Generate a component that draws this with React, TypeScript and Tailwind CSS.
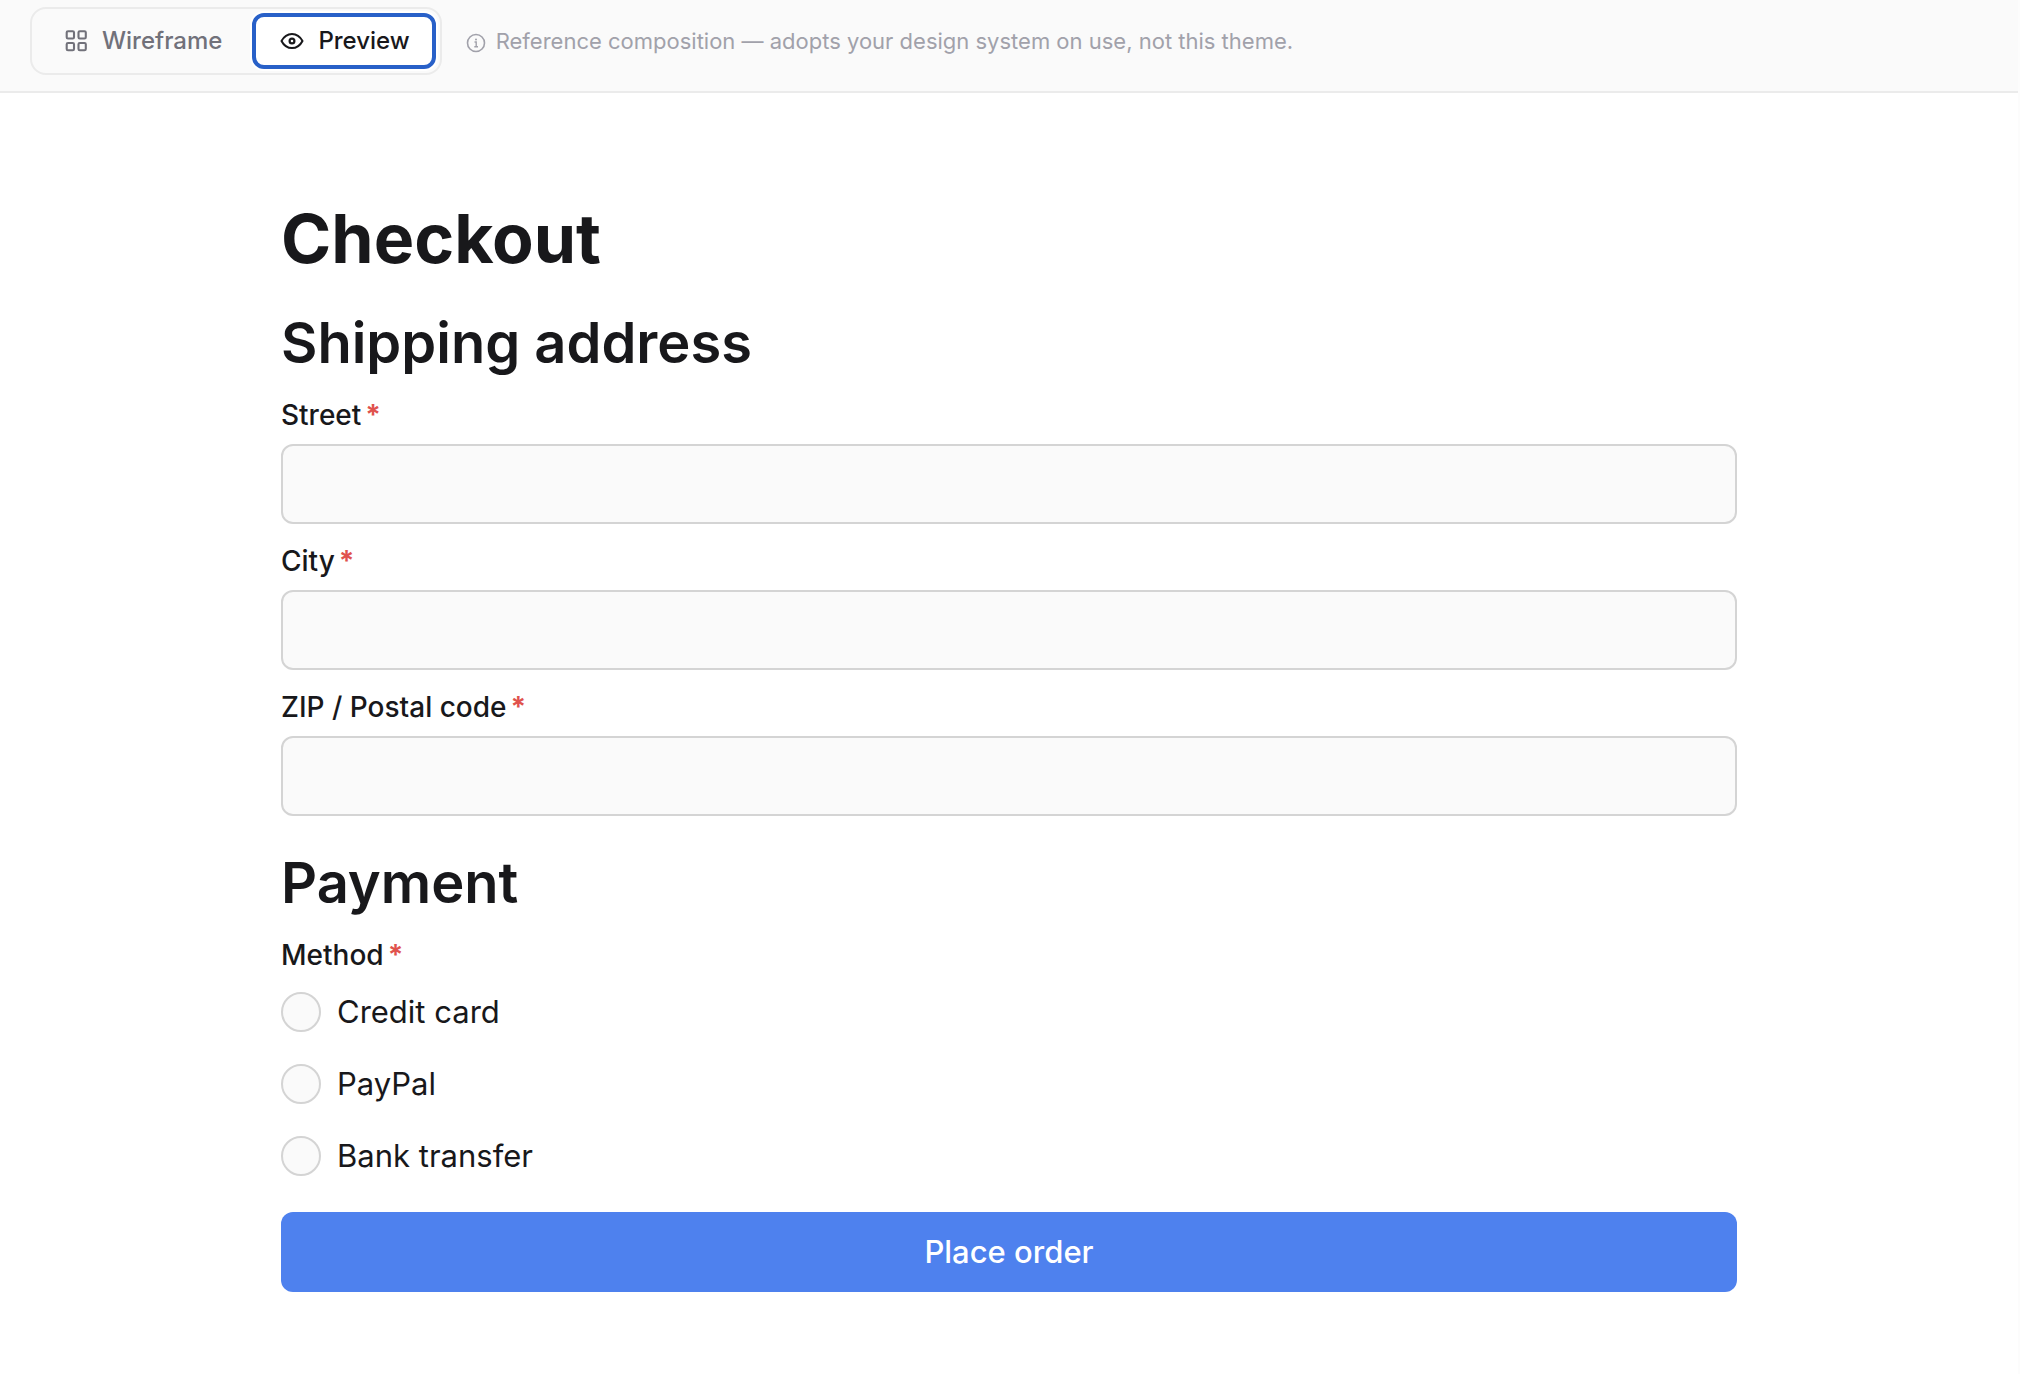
import { useState } from "react"

const fields = [
	{ id: "street", label: "Street" },
	{ id: "city", label: "City" },
	{ id: "zip", label: "ZIP / Postal code" },
]

const methods = ["Credit card", "PayPal", "Bank transfer"]

const GridIcon = () => (
	<svg width="24" height="24" viewBox="0 0 24 24" fill="none" stroke="currentColor" strokeWidth="2.1" aria-hidden="true">
		<rect x="2.7" y="2.2" width="7.3" height="7.3" rx="1.3" />
		<rect x="14.5" y="2.2" width="7.3" height="7.3" rx="1.3" />
		<rect x="2.7" y="14" width="7.3" height="7.3" rx="1.3" />
		<rect x="14.5" y="14" width="7.3" height="7.3" rx="1.3" />
	</svg>
)

const EyeIcon = () => (
	<svg width="24" height="24" viewBox="0 0 24 24" fill="none" stroke="currentColor" strokeWidth="2" aria-hidden="true">
		<path d="M1.5 12C4 7.200 7.800 4.900 12 4.900S20 7.200 22.500 12C20 16.800 16.200 19.100 12 19.100S4 16.800 1.500 12Z" strokeLinejoin="round" />
		<circle cx="12" cy="12" r="2.400" strokeWidth="2.200" />
	</svg>
)

const InfoIcon = () => (
	<svg width="20" height="20" viewBox="0 0 20 20" fill="none" stroke="currentColor" strokeWidth="1.600" className="mt-1" aria-hidden="true">
		<circle cx="10" cy="10" r="8.500" />
		<path d="M8.500 9H10.200V13.500M8.300 13.700H12" strokeWidth="1.400" />
		<circle cx="10" cy="6.500" r="1" fill="currentColor" stroke="none" />
	</svg>
)

const Required = () => <span className="ml-1 font-bold text-[#e0524d]">*</span>

const App = () => {
	const [view, setView] = useState("preview")
	const [method, setMethod] = useState("")

	const tabClass = (name: string) =>
		view === name
			? "flex h-14 items-center gap-3.5 rounded-xl border-4 border-[#2860c8] bg-white pr-[22px] pl-6 text-[#18181b] ring-2 ring-white"
			: "flex h-14 items-center gap-3.5 rounded-xl border-4 border-transparent pr-[22px] pl-6 text-[#71717a]"

	return (
		<div className="min-h-screen border-r-2 border-[#fcfcfc] bg-white font-['Inter','Liberation_Sans',sans-serif] text-[#18181b]">
			<header className="flex items-center gap-6 border-b-2 border-[#ebebeb] bg-[#fafafa] px-[30px] pt-[7px] pb-4">
				<div className="flex gap-1 rounded-2xl border-2 border-[#ebebeb] p-1 text-2xl font-medium">
					<button type="button" aria-pressed={view === "wireframe"} onClick={() => setView("wireframe")} className={tabClass("wireframe")}>
						<GridIcon />
						Wireframe
					</button>
					<button type="button" aria-pressed={view === "preview"} onClick={() => setView("preview")} className={tabClass("preview")}>
						<EyeIcon />
						Preview
					</button>
				</div>
				<p className="flex items-center gap-2.5 text-[22px] text-[#a1a1aa]">
					<InfoIcon />
					Reference composition — adopts your design system on use, not this theme.
				</p>
			</header>

			<main className="px-10 pt-[108px] pb-20">
				<form className="mx-auto flex max-w-[1456px] flex-col gap-8" onSubmit={(e) => e.preventDefault()}>
					<h1 className="text-[68px] leading-[75px] font-bold">Checkout</h1>

					<section className="flex flex-col gap-4">
						<h2 className="text-[56px] leading-[70px] font-semibold">Shipping address</h2>
						{fields.map(({ id, label }) => (
							<div key={id} className="flex flex-col gap-2">
								<label htmlFor={id} className="text-[28px] leading-[42px] font-medium">
									{label}
									<Required />
								</label>
								<input
									id={id}
									name={id}
									type="text"
									required
									className="h-20 w-full rounded-xl border-2 border-[#d4d4d4] bg-[#fafafa] px-6 text-[31px]"
								/>
							</div>
						))}
					</section>

					<section className="flex flex-col gap-4">
						<h2 className="text-[56px] leading-[70px] font-semibold">Payment</h2>
						<fieldset>
							<legend className="mb-3 text-[28px] leading-[42px] font-medium">
								Method
								<Required />
							</legend>
							<div className="flex flex-col items-start gap-6">
								{methods.map((name) => (
									<label key={name} className="flex items-center gap-4 text-[31px] leading-[48px]">
										<input
											type="radio"
											name="method"
											value={name}
											checked={method === name}
											onChange={() => setMethod(name)}
											className="size-10 appearance-none rounded-full border-2 border-[#d4d4d4] bg-[#fafafa] checked:border-[12px] checked:border-[#4e81ee]"
										/>
										{name}
									</label>
								))}
							</div>
						</fieldset>
					</section>

					<button type="submit" className="h-20 w-full rounded-xl bg-[#4e81ee] text-[31px] font-medium text-white">
						Place order
					</button>
				</form>
			</main>
		</div>
	)
}

export default App
